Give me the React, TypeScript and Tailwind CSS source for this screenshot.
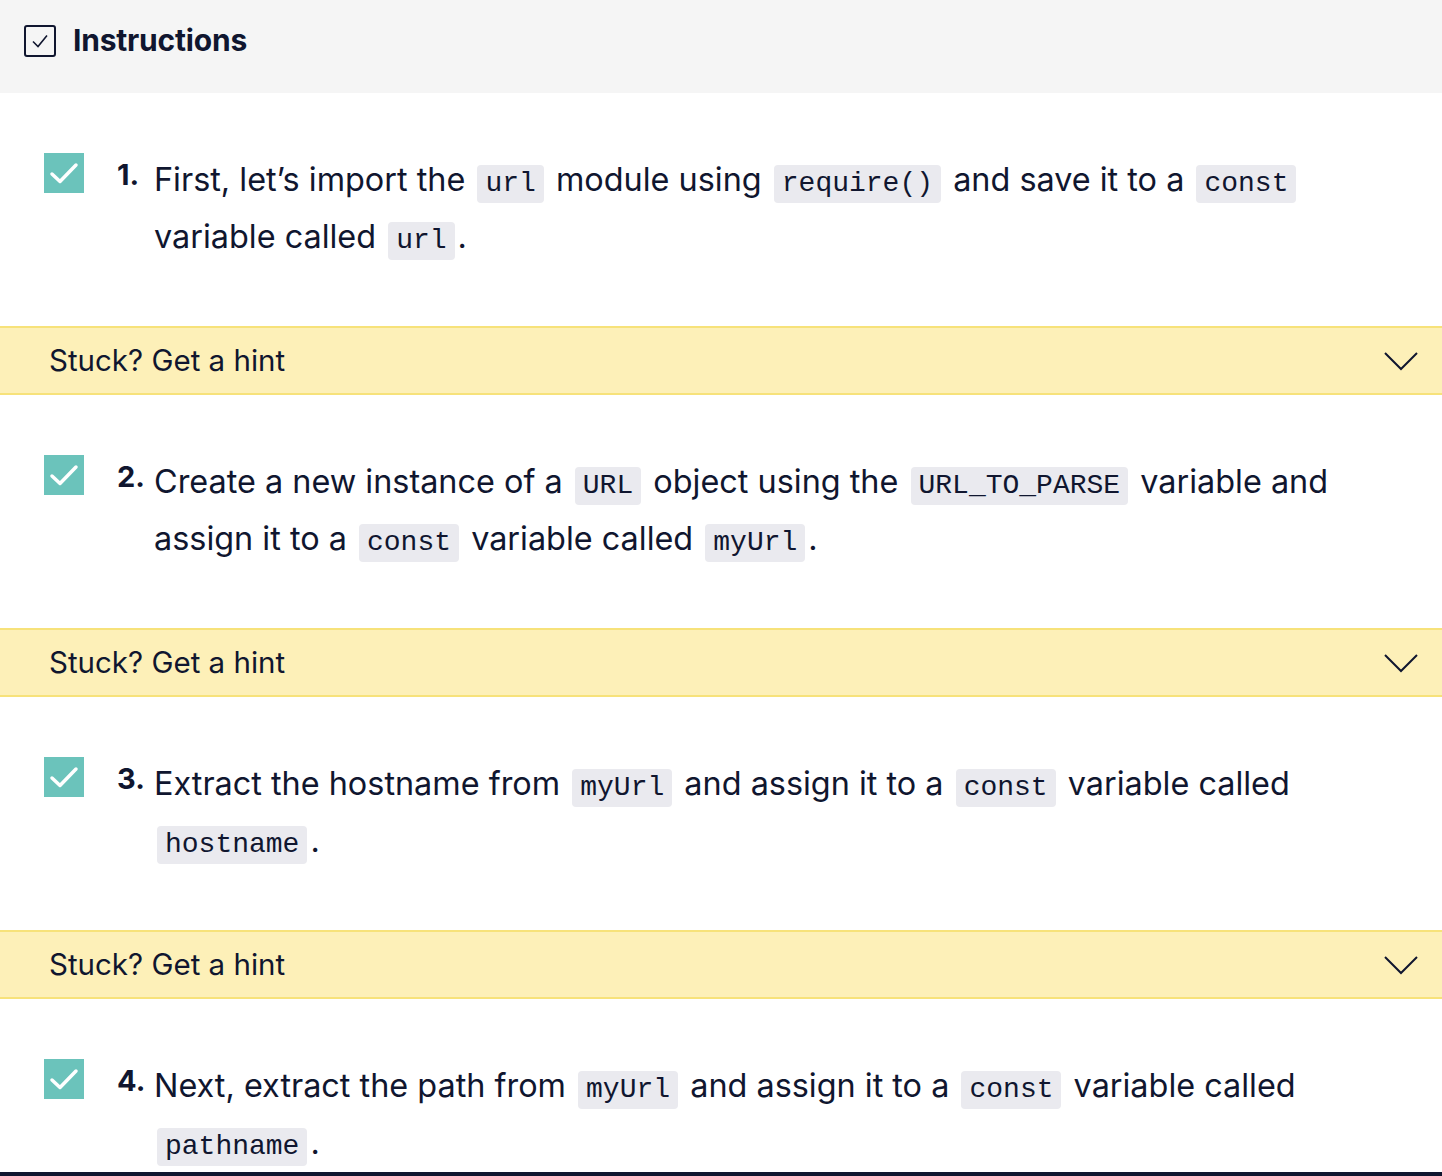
import React from "react";

const C = ({ children }: { children: React.ReactNode }) => (
  <code className="mx-[3px] rounded-[4px] bg-[#eaeaef] px-[8px] pb-[4px] pt-[3px] font-['Liberation_Mono',monospace] text-[28px] leading-none text-[#10162f]">
    {children}
  </code>
);

const Check = () => (
  <div className="flex h-[40px] w-[40px] shrink-0 items-center justify-center bg-[#6bc3bb]">
    <svg width="30" height="24" viewBox="0 0 30 24" fill="none">
      <path d="M3 13 L11 20.5 L27 4" stroke="white" strokeWidth="3.5" strokeLinecap="round" strokeLinejoin="round" />
    </svg>
  </div>
);

const Step = ({ n, children, last }: { n: number; children: React.ReactNode; last?: boolean }) => (
  <div className={`flex pl-[44px] pr-[40px] pt-[60px] ${last ? "h-[173px]" : "h-[233px]"}`}>
    <Check />
    <div className="ml-[33px] w-[37px] shrink-0 text-[29px] font-bold leading-[44px]">{n}.</div>
    <div className="-mt-[2px] text-[32.4px] leading-[57px]">{children}</div>
  </div>
);

const Hint = () => (
  <div className="flex h-[69px] items-center justify-between border-y-2 border-[#f7e27a] bg-[#fdf0b8] pl-[49px] pr-[24px]">
    <span className="text-[29.5px]">Stuck? Get a hint</span>
    <svg width="34" height="20" viewBox="0 0 34 20" fill="none">
      <path d="M1 2 L17 18 L33 2" stroke="#10162f" strokeWidth="2" />
    </svg>
  </div>
);

export default function App() {
  return (
    <div className="h-[1176px] w-[1442px] overflow-hidden bg-white font-['Inter',sans-serif] text-[#10162f]">
      <div className="flex h-[93px] items-center bg-[#f5f5f5] pb-[12px] pl-[24px]">
        <div className="flex h-[32px] w-[32px] items-center justify-center rounded-[3px] border-2 border-[#10162f]">
          <svg width="18" height="16" viewBox="0 0 18 16" fill="none">
            <path d="M2 8.5 L7 13.5 L16 2.5" stroke="#10162f" strokeWidth="1.6" />
          </svg>
        </div>
        <span className="ml-[17px] text-[30px] font-bold tracking-[-0.2px]">Instructions</span>
      </div>

      <Step n={1}>
        First, let’s import the <C>url</C> module using <C>require()</C> and save it to a <C>const</C> variable called{" "}
        <C>url</C>.
      </Step>
      <Hint />
      <Step n={2}>
        Create a new instance of a <C>URL</C> object using the <C>URL_TO_PARSE</C> variable and assign it to a{" "}
        <C>const</C> variable called <C>myUrl</C>.
      </Step>
      <Hint />
      <Step n={3}>
        Extract the hostname from <C>myUrl</C> and assign it to a <C>const</C> variable called <C>hostname</C>.
      </Step>
      <Hint />
      <Step n={4} last>
        Next, extract the path from <C>myUrl</C> and assign it to a <C>const</C> variable called <C>pathname</C>.
      </Step>
      <div className="h-[4px] bg-[#10162f]" />
    </div>
  );
}
